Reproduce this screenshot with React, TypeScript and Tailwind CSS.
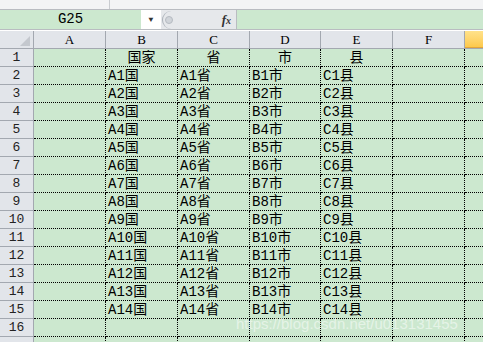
import React from 'react';

const cols = ['A', 'B', 'C', 'D', 'E', 'F', 'G'];
const colW = ['w-[72px]', 'w-[72px]', 'w-[72px]', 'w-[71px]', 'w-[72px]', 'w-[72px]', 'flex-1'];

const buildRows = () => {
  const rows: string[][] = [['', '国家', '省', '市', '县', '', '']];
  for (let i = 1; i <= 14; i++) {
    rows.push(['', `A${i}国`, `A${i}省`, `B${i}市`, `C${i}县`, '', '']);
  }
  rows.push(['', '', '', '', '', '', '']);
  rows.push(['', '', '', '', '', '', '']);
  return rows;
};

const App = () => {
  const rows = buildRows();

  return (
    <div className="relative w-[483px] h-[342px] overflow-hidden bg-[#cce8cf] font-['Liberation_Mono','Noto_Sans_CJK_SC',monospace] text-black">
      {/* ribbon remnant */}
      <div className="flex h-[10px] bg-[#f3f4f5] border-b border-[#b9bcc1]">
        <div className="w-[110px] border-r border-[#c9ccd0]" />
      </div>

      {/* formula bar */}
      <div className="flex h-[20px] border-b border-[#b9bcc1]">
        <div className="w-[141px] flex items-center justify-center text-[14px] bg-[#cce8cf]">G25</div>
        <div className="w-[20px] flex items-center justify-center bg-white">
          <span className="text-[8px] text-[#333]">▼</span>
        </div>
        <div className="w-[76px] flex items-center bg-[#e6e8eb] border-r border-[#b9bcc1]">
          <div className="ml-[1px] w-[12px] h-[18px] rounded-l-full border-l border-[#aab0b8] flex items-center">
            <div className="ml-[2px] w-[8px] h-[8px] rounded-full bg-[#d0d4d9] border border-[#b5bac1]" />
          </div>
          <span className="ml-auto mr-[5px] text-[13px] italic font-bold font-['Liberation_Serif',serif] text-[#333]">
            f<span className="text-[10px]">x</span>
          </span>
        </div>
        <div className="flex-1 bg-[#cce8cf]" />
      </div>
      <div className="h-[1px] bg-white" />

      {/* column headers */}
      <div className="flex h-[18px] bg-[#e2e5ea] border-b border-[#a3a8b0] text-[13px] font-['Liberation_Serif',serif]">
        <div className="w-[34px] border-r border-[#a3a8b0] relative flex items-end justify-end pr-[3px] pb-[2px]">
          <div className="w-0 h-0 border-l-[10px] border-l-transparent border-b-[10px] border-b-[#c4c8ce]" />
        </div>
        {cols.map((c, i) =>
          c === 'G' ? (
            <div key={c} className="flex-1 bg-gradient-to-b from-[#ffe28a] to-[#fdc94a] border-b border-[#e2a63a]" />
          ) : (
            <div key={c} className={`${colW[i]} flex items-center justify-center border-r border-[#a3a8b0]`}>
              {c}
            </div>
          )
        )}
      </div>

      {/* rows */}
      {rows.map((r, ri) => (
        <div key={ri} className="flex h-[18px]">
          <div className="w-[34px] flex items-center justify-center bg-[#e2e5ea] border-r border-b border-[#a3a8b0] text-[13px] text-[#222]">
            {ri < 16 ? ri + 1 : ''}
          </div>
          {r.map((v, ci) => (
            <div
              key={ci}
              className={`${colW[ci]} h-[18px] border-b border-dotted border-black ${ci < 6 ? 'border-r' : ''} text-[14px] leading-[19px] whitespace-nowrap overflow-hidden ${ri === 0 ? 'text-center' : 'pl-[2px]'}`}
            >
              {v}
            </div>
          ))}
        </div>
      ))}

      {/* watermark */}
      <div className="absolute left-[236px] top-[313px] text-[15px] font-['Liberation_Sans',sans-serif] text-white/50">
        https://blog.csdn.net/u013131455
      </div>
    </div>
  );
};

export default App;
